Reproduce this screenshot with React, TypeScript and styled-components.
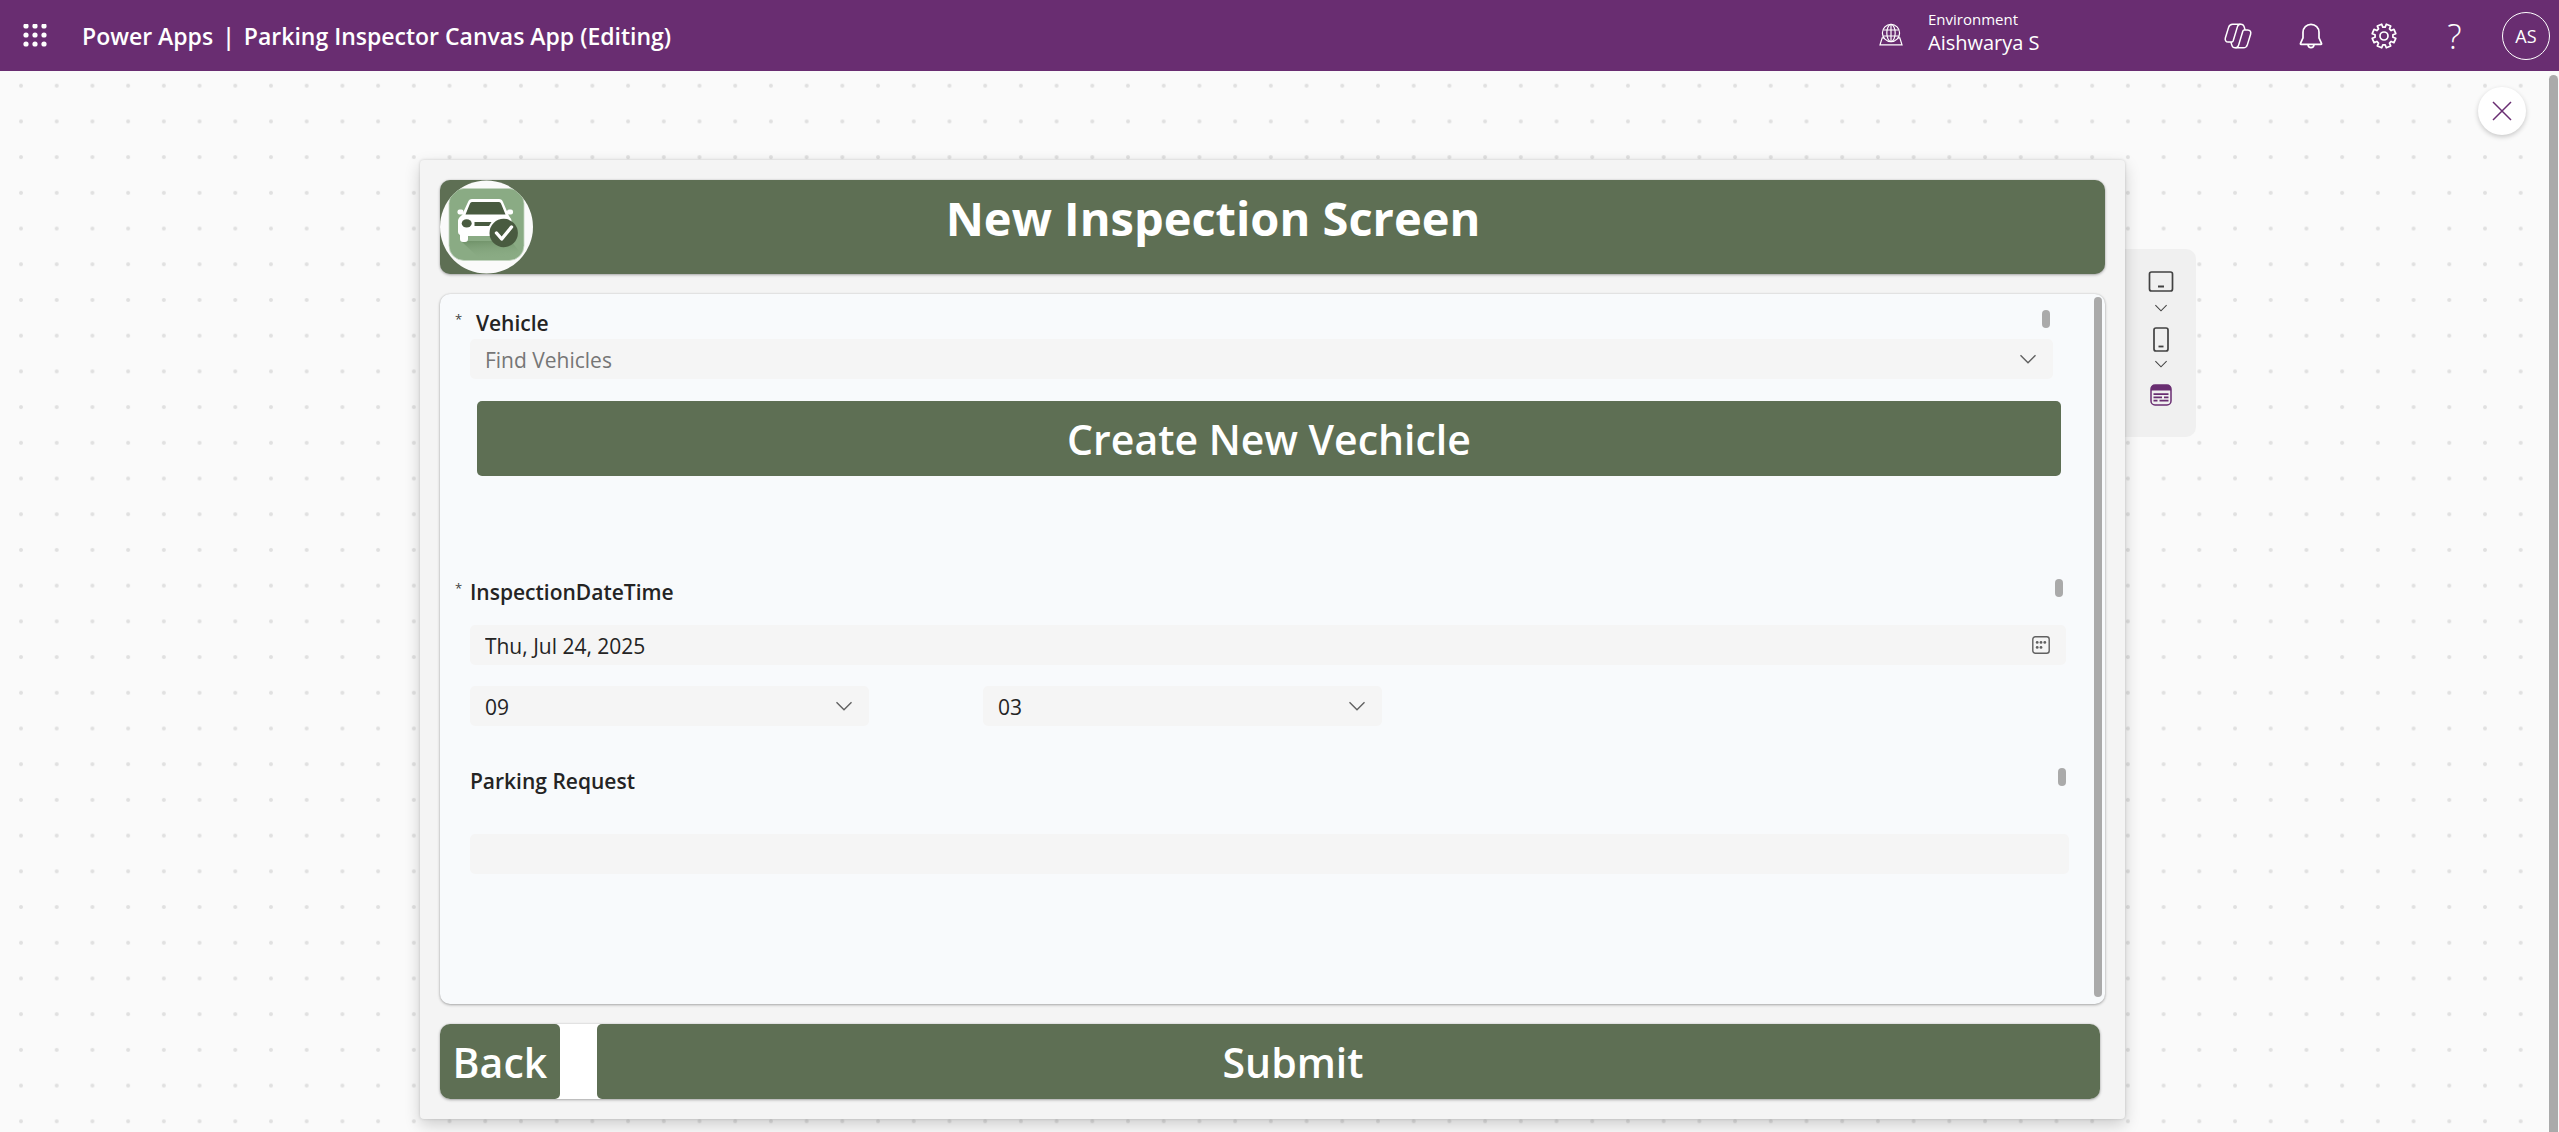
import React from "react";
import styled, { createGlobalStyle } from "styled-components";

const color = {
  brand: "#692d71",
  green: "#5e6f54",
  canvas: "#fafafa",
  screen: "#f4f4f4",
  card: "#f8fafc",
  field: "#f5f5f5",
  ink: "#242424",
  hint: "#767676",
  thumb: "#aaaaaa",
};

const GlobalStyle = createGlobalStyle`
  *, *::before, *::after { box-sizing: border-box; }
  body { margin: 0; background: ${color.canvas}; }
  body, button, input, select {
    font-family: "Open Sans", "Noto Sans", sans-serif;
    color: ${color.ink};
  }
  button, input, select { margin: 0; border: 0; padding: 0; }
  button { background: none; cursor: pointer; }
  svg { display: block; }
`;

const Page = styled.div`
  display: flex;
  flex-direction: column;
  min-height: 100vh;
`;

/* ---------- top bar ---------- */

const TopBar = styled.header`
  display: flex;
  align-items: center;
  height: 71px;
  padding: 0 9px 0 23px;
  background: ${color.brand};
`;

const BarButton = styled.button<{ $w?: number }>`
  display: grid;
  place-items: center;
  width: ${(p) => p.$w ?? 73}px;
  height: 70px;
  color: #fff;
`;

const Titles = styled.h1`
  display: flex;
  flex: 1;
  gap: 9px;
  margin: 0 0 0 35px;
  color: #fff;
  font-size: 23px;
  font-weight: 600;
  line-height: 30px;
`;

const Environment = styled.div`
  display: grid;
  grid-template-columns: 24px auto;
  column-gap: 25px;
  align-items: center;
  margin-right: 163px;
  padding-bottom: 8px;
  color: #fff;

  svg { margin-top: 6px; }
`;

const EnvText = styled.div`
  display: flex;
  flex-direction: column;
  width: 110px;
  white-space: nowrap;
`;

const EnvLabel = styled.span`
  font-size: 15px;
  line-height: 22px;
`;

const EnvName = styled.span`
  font-size: 20px;
  line-height: 26px;
`;

const HelpMark = styled.span`
  font-size: 34px;
  font-weight: 300;
  line-height: 40px;
`;

const Avatar = styled.button`
  width: 48px;
  height: 48px;
  margin-left: 13px;
  border: 1px solid #fff;
  border-radius: 50%;
  color: #fff;
  font-size: 18px;
`;

/* ---------- workspace ---------- */

const Workspace = styled.main`
  position: relative;
  display: flex;
  flex: 1;
`;

const DotGrid = styled.svg`
  position: absolute;
  inset: 0;
  width: 100%;
  height: 100%;
`;

const Stage = styled.div`
  position: relative;
  display: grid;
  flex: 1;
  grid-template-columns: 1fr 67% 1fr;
  padding: 89px 0 13px;
`;

const Rail = styled.div`
  position: relative;
  width: 14px;
  padding: 4px 1px 0 4px;
  background: ${color.canvas};
`;

const RailThumb = styled.div`
  height: 100%;
  border-radius: 5px 5px 0 0;
  background: ${color.thumb};
`;

const CloseButton = styled.button`
  position: absolute;
  top: 16px;
  right: 33px;
  display: grid;
  place-items: center;
  width: 48px;
  height: 48px;
  border-radius: 50%;
  background: #fff;
  color: ${color.brand};
  box-shadow: 0 2px 5px rgba(0, 0, 0, 0.2);
`;

const SidePanel = styled.aside`
  display: flex;
  flex-direction: column;
  align-items: center;
  width: 71px;
  height: 188px;
  margin-top: 89px;
  padding-top: 20px;
  border-radius: 0 10px 10px 0;
  background: #f0f0f0;
`;

const SideButton = styled.button<{ $h: number; $active?: boolean }>`
  display: grid;
  place-items: center;
  width: 40px;
  height: ${(p) => p.$h}px;
  color: ${(p) => (p.$active ? color.brand : "#424242")};
`;

/* ---------- app screen ---------- */

const Screen = styled.section`
  position: relative;
  grid-column: 2;
  display: flex;
  flex-direction: column;
  gap: 20px;
  padding: 20px;
  border-radius: 4px;
  background: ${color.screen};
  box-shadow: 0 6px 16px rgba(0, 0, 0, 0.18), 0 0 3px rgba(0, 0, 0, 0.16);
`;

const cardShadow = "0 1px 3px rgba(0, 0, 0, 0.3), 0 0 2px rgba(0, 0, 0, 0.12)";

const ScreenHeader = styled.header`
  display: grid;
  grid-template-columns: 93px 1fr 212px;
  height: 94px;
  border-radius: 10px;
  overflow: hidden;
  background: ${color.green};
  box-shadow: ${cardShadow};
`;

const ScreenTitle = styled.h2`
  margin: 0;
  padding-top: 4px;
  color: #fff;
  font-size: 47px;
  font-weight: 700;
  line-height: 68px;
  text-align: center;
`;

const FormCard = styled.div`
  display: grid;
  flex: 1;
  grid-template-columns: 1fr 8px;
  border-radius: 10px;
  padding: 3px 3px 7px 0;
  background: ${color.card};
  box-shadow: ${cardShadow};
`;

const Form = styled.form`
  display: flex;
  flex-direction: column;
`;

const FormThumb = styled.div`
  border-radius: 4px;
  background: ${color.thumb};
`;

const Section = styled.section<{ $top: number; $right: number }>`
  display: flex;
  flex-direction: column;
  padding: ${(p) => p.$top}px ${(p) => p.$right}px 0 30px;
`;

const LabelRow = styled.div<{ $gap: number }>`
  display: flex;
  align-items: flex-start;
  height: 29px;
  margin: 0 3px ${(p) => p.$gap}px -15px;
`;

const Star = styled.span`
  width: 15px;
  color: #424242;
  font-size: 13px;
  line-height: 18px;
`;

const Label = styled.label<{ $indent?: boolean }>`
  flex: 1;
  padding-left: ${(p) => (p.$indent ? 6 : 0)}px;
  font-size: 21px;
  font-weight: 600;
  line-height: 26px;
`;

const Grip = styled.span`
  width: 8px;
  height: 18px;
  border-radius: 4px;
  background: ${color.thumb};
`;

const Field = styled.div`
  display: grid;
  grid-template-columns: 1fr 50px;
  height: 40px;
  border-radius: 5px;
  background: ${color.field};
  color: #616161;
`;

const TextInput = styled.input`
  grid-area: 1 / 1;
  width: 100%;
  padding: 1px 15px 0;
  background: transparent;
  font-size: 21px;
  &::placeholder { color: ${color.hint}; opacity: 1; }
`;

const Picker = styled.select`
  grid-area: 1 / 1 / 2 / 3;
  appearance: none;
  padding: 1px 15px 0;
  background: transparent;
  font-size: 21px;
`;

const FieldIcon = styled.span`
  grid-area: 1 / 2;
  display: grid;
  place-items: center;
  pointer-events: none;
`;

const FieldButton = styled.button`
  grid-area: 1 / 2;
  display: grid;
  place-items: center;
  color: #616161;
`;

const TimeRow = styled.div`
  display: grid;
  grid-template-columns: 25% 25%;
  column-gap: 114px;
  padding-top: 21px;
`;

const ActionButton = styled.button<{ $endSpace?: number }>`
  height: 75px;
  padding-right: ${(p) => p.$endSpace ?? 0}px;
  border-radius: 5px;
  background: ${color.green};
  color: #fff;
  font-size: 41px;
  font-weight: 600;
  line-height: 60px;
`;

const CreateRow = styled.div`
  display: grid;
  padding: 22px 33px 0 37px;
`;

const Footer = styled.footer`
  display: grid;
  grid-template-columns: 120px 1fr;
  column-gap: 37px;
  margin-right: 5px;
  border-radius: 10px;
  overflow: hidden;
  background: #fff;
  box-shadow: ${cardShadow};
`;

/* ---------- icons ---------- */

const WaffleIcon = () => (
  <svg width="24" height="24" viewBox="0 0 24 24" fill="currentColor">
    {[3, 12, 21].map((y) => [3, 12, 21].map((x) => <circle key={`${x}-${y}`} cx={x} cy={y - 1} r="2.6" />))}
  </svg>
);

const GlobeIcon = () => (
  <svg width="24" height="24" viewBox="0 0 24 24" fill="none" stroke="currentColor" strokeWidth="1.2">
    <circle cx="12" cy="10" r="8.6" />
    <ellipse cx="12" cy="10" rx="4.2" ry="8.6" />
    <path d="M12 1.4v17.2M4.2 7h15.600M4.2 13h15.600" />
    <path d="M5 14.800H3.200L1 21.800h22l-2.200-7H19" />
  </svg>
);

const CopilotIcon = () => (
  <svg width="28" height="26" viewBox="0 0 28 26" fill="none" stroke="currentColor" strokeWidth="1.5" strokeLinejoin="round">
    {[0, 180].map((turn) => (
      <g key={turn} transform={`rotate(${turn} 14 13)`}>
        <path d="M8 19H4.400C1.800 19 .700 17.200 1.400 14.800L4.600 4.400C5.200 2.300 6.500 1.200 8.600 1.200H17c1.600 0 2.600.8 3.100 2.400l1 3.400" />
        <path d="M16.500 1.200c-1.700 0-2.600 1-3.100 2.700L9.200 17.800C8.900 18.600 8.500 19 8 19" />
      </g>
    ))}
  </svg>
);

const BellIcon = () => (
  <svg width="24" height="26" viewBox="0 0 24 26" fill="none" stroke="currentColor" strokeWidth="1.7" strokeLinejoin="round">
    <path d="M12 1.300c-4.500 0-8 3.500-8 8v5.600L1.500 20.400c-.2.500 0 .9.500.9h20c.5 0 .7-.4.5-.9L20 14.900V9.300c0-4.500-3.500-8-8-8Z" />
    <path d="M9 21.500c.1 1.900 1.300 3.200 3 3.200s2.900-1.300 3-3.200" />
  </svg>
);

const gearPath = (() => {
  const teeth = 8;
  const step = (Math.PI * 2) / teeth;
  const point = (r: number, a: number) =>
    `${(13 + r * Math.sin(a)).toFixed(2)} ${(13 - r * Math.cos(a)).toFixed(2)}`;
  const parts: string[] = [];
  for (let i = 0; i < teeth; i++) {
    const a = (i + 0.5) * step;
    parts.push(point(9, a - 0.26), point(12, a - 0.2), point(12, a + 0.2), point(9, a + 0.26));
  }
  return `M${parts.join("L")}Z`;
})();

const GearIcon = () => (
  <svg width="26" height="26" viewBox="0 0 26 26" fill="none" stroke="currentColor" strokeWidth="1.700" strokeLinejoin="round">
    <path d={gearPath} />
    <circle cx="13" cy="13" r="4" />
  </svg>
);

const CloseIcon = () => (
  <svg width="20" height="20" viewBox="0 0 20 20" fill="none" stroke="currentColor" strokeWidth="1.500">
    <path d="m1 1 18 18M19 1 1 19" />
  </svg>
);

const Chevron = ({ size = 16 }: { size?: number }) => (
  <svg width={size} height={size} viewBox="0 0 16 16" fill="none" stroke="currentColor" strokeWidth="1.400">
    <path d="m.5 4.300 7.500 7.500 7.500-7.500" />
  </svg>
);

const CalendarIcon = () => (
  <svg width="18" height="18" viewBox="0 0 18 18" fill="currentColor">
    <rect x=".8" y=".8" width="16.400" height="16.400" rx="2.500" fill="none" stroke="currentColor" strokeWidth="1.400" />
    <circle cx="5.200" cy="6.400" r="1.400" />
    <circle cx="9" cy="6.400" r="1.400" />
    <circle cx="12.800" cy="6.400" r="1.400" />
    <circle cx="5.200" cy="11.400" r="1.400" />
    <circle cx="9" cy="11.400" r="1.400" />
  </svg>
);

const TabletIcon = () => (
  <svg width="26" height="22" viewBox="0 0 26 22" fill="none" stroke="currentColor" strokeWidth="1.700">
    <rect x="1.500" y="1" width="23" height="19" rx="2" />
    <path d="M10 15.500h6" strokeWidth="2" />
  </svg>
);

const PhoneIcon = () => (
  <svg width="16" height="25" viewBox="0 0 16 25" fill="none" stroke="currentColor" strokeWidth="1.700">
    <rect x="1" y="1" width="14" height="23" rx="2" />
    <path d="M5.500 19.500h5" strokeWidth="1.800" />
  </svg>
);

const FormIcon = () => (
  <svg width="22" height="22" viewBox="0 0 22 22" fill="none" stroke="currentColor">
    <rect x="1" y="1" width="20" height="20" rx="4" strokeWidth="1.500" />
    <path d="M1 6.500V5a4 4 0 0 1 4-4h12a4 4 0 0 1 4 4v1.500Z" fill="currentColor" stroke="none" />
    <path d="M3.500 10.200h15M3.500 13.400h8.500M14 13.400h4.500M3.500 16.600h4M9.500 16.600h9" strokeWidth="1.700" />
  </svg>
);

const AppLogo = () => (
  <svg width="93" height="94" viewBox="0 0 93 94" role="img" aria-label="Parking inspector logo">
    <defs>
      <clipPath id="disc"><circle cx="46.500" cy="47" r="46.500" /></clipPath>
      <linearGradient id="shade" x1="0" y1="0" x2="0.200" y2="1">
        <stop offset="0" stopColor="#6f9168" />
        <stop offset="1" stopColor="#8aab84" stopOpacity="0" />
      </linearGradient>
    </defs>
    <g clipPath="url(#disc)">
      <rect width="93" height="94" fill="#fafafa" />
      <rect x="9" y="8.500" width="75" height="72" rx="15" fill="#8aab84" stroke="#c3d6c0" strokeWidth="0.800" />
      <path d="M21 61h50l8 10-8 9H41Z" fill="url(#shade)" />
      <path d="M32 19h27q3 0 4 3l6 14q3 3 3 7v11q0 2-2 2H28v3q0 3-3 3h-2q-3 0-3-3v-4q-2-1-2-3V41q0-3 4-6l6-13q1-3 4-3Z" fill="#fff" />
      <rect x="17.500" y="29.500" width="6" height="5" rx="2" fill="#fff" />
      <rect x="67" y="29.500" width="6" height="5" rx="2" fill="#fff" />
      <path d="M32 22h27q1.500 0 2 1.500L65.500 34.500h-40L30 23.500q.5-1.500 2-1.500Z" fill="#495b40" />
      <ellipse cx="26.700" cy="43.400" rx="5" ry="4.200" fill="#495b40" />
      <path d="M34.500 42h17l-2.500 4H34.500Z" fill="#495b40" />
      <circle cx="63.700" cy="53" r="14.200" fill="#495b40" />
      <path d="m56.500 53 5.200 6 9.800-12" fill="none" stroke="#fff" strokeWidth="3.400" strokeLinecap="round" strokeLinejoin="round" />
    </g>
  </svg>
);

/* ---------- page ---------- */

export default function App() {
  return (
    <Page>
      <GlobalStyle />
      <TopBar>
        <BarButton $w={24} aria-label="App launcher"><WaffleIcon /></BarButton>
        <Titles>
          <span>Power Apps</span>
          <span>|</span>
          <span>Parking Inspector Canvas App (Editing)</span>
        </Titles>
        <Environment>
          <GlobeIcon />
          <EnvText>
            <EnvLabel>Environment</EnvLabel>
            <EnvName>Aishwarya S</EnvName>
          </EnvText>
        </Environment>
        <BarButton aria-label="Copilot"><CopilotIcon /></BarButton>
        <BarButton aria-label="Notifications"><BellIcon /></BarButton>
        <BarButton aria-label="Settings"><GearIcon /></BarButton>
        <BarButton $w={69} aria-label="Help"><HelpMark>?</HelpMark></BarButton>
        <Avatar aria-label="Account">AS</Avatar>
      </TopBar>

      <Workspace>
        <DotGrid aria-hidden="true">
          <defs>
            <pattern id="dots" x="3.150" y="-3.150" width="35.710" height="35.710" patternUnits="userSpaceOnUse">
              <circle cx="17.850" cy="17.850" r="2" fill="#e0e0e0" />
            </pattern>
          </defs>
          <rect width="100%" height="100%" fill="url(#dots)" />
        </DotGrid>

        <Stage>
          <Screen>
            <ScreenHeader>
              <AppLogo />
              <ScreenTitle>New Inspection Screen</ScreenTitle>
            </ScreenHeader>

            <FormCard>
              <Form onSubmit={(e) => e.preventDefault()} id="inspection">
                <Section $top={13} $right={41}>
                  <LabelRow $gap={0}>
                    <Star>*</Star>
                    <Label $indent htmlFor="vehicle">Vehicle</Label>
                    <Grip />
                  </LabelRow>
                  <Field>
                    <TextInput id="vehicle" placeholder="Find Vehicles" />
                    <FieldButton type="button" aria-label="Show vehicles"><Chevron /></FieldButton>
                  </Field>
                </Section>
                <CreateRow>
                  <ActionButton type="button">Create New Vechicle</ActionButton>
                </CreateRow>

                <Section $top={103} $right={28}>
                  <LabelRow $gap={17}>
                    <Star>*</Star>
                    <Label htmlFor="date">InspectionDateTime</Label>
                    <Grip />
                  </LabelRow>
                  <Field>
                    <TextInput id="date" defaultValue="Thu, Jul 24, 2025" />
                    <FieldButton type="button" aria-label="Open calendar"><CalendarIcon /></FieldButton>
                  </Field>
                  <TimeRow>
                    <Field>
                      <Picker aria-label="Hour" defaultValue="09">
                        <option>09</option>
                        <option>10</option>
                      </Picker>
                      <FieldIcon><Chevron /></FieldIcon>
                    </Field>
                    <Field>
                      <Picker aria-label="Minute" defaultValue="03">
                        <option>03</option>
                        <option>04</option>
                      </Picker>
                      <FieldIcon><Chevron /></FieldIcon>
                    </Field>
                  </TimeRow>
                </Section>

                <Section $top={42} $right={25}>
                  <LabelRow $gap={37}>
                    <Star />
                    <Label htmlFor="request">Parking Request</Label>
                    <Grip />
                  </LabelRow>
                  <Field>
                    <TextInput id="request" />
                  </Field>
                </Section>
              </Form>
              <FormThumb />
            </FormCard>

            <Footer>
              <ActionButton type="button">Back</ActionButton>
              <ActionButton type="submit" form="inspection" $endSpace={111}>Submit</ActionButton>
            </Footer>
          </Screen>

          <SidePanel>
            <SideButton $h={26} aria-label="Tablet"><TabletIcon /></SideButton>
            <SideButton $h={25} aria-label="Tablet sizes"><Chevron size={12} /></SideButton>
            <SideButton $h={38} aria-label="Phone"><PhoneIcon /></SideButton>
            <SideButton $h={8} aria-label="Phone sizes"><Chevron size={12} /></SideButton>
            <SideButton $h={58} $active aria-label="Responsive form"><FormIcon /></SideButton>
          </SidePanel>
        </Stage>

        <Rail><RailThumb /></Rail>
        <CloseButton aria-label="Close preview"><CloseIcon /></CloseButton>
      </Workspace>
    </Page>
  );
}
